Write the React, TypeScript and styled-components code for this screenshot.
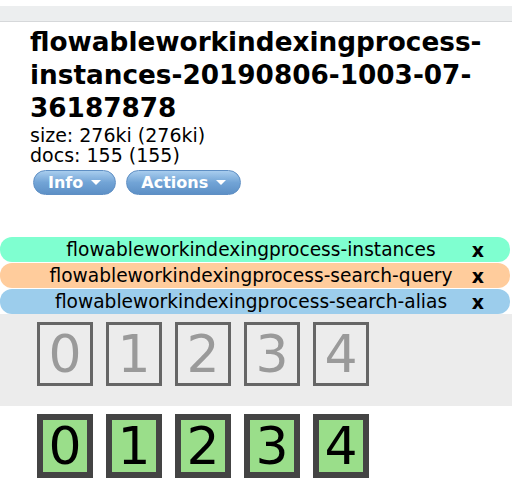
import React from "react";
import styled, { createGlobalStyle } from "styled-components";

const Global = createGlobalStyle`
  html, body { margin: 0; padding: 0; background: #fff; }
  body { font-family: "DejaVu Sans", Verdana, sans-serif; color: #000; }
`;

const Page = styled.div`
  width: 512px;
  overflow: hidden;
`;

const TopBar = styled.div`
  margin-top: 6px;
  height: 15px;
  background: #eceeef;
  border-bottom: 1px solid #d6d8da;
`;

const Header = styled.div`
  padding: 4px 0 0 30px;
`;

const Title = styled.h2`
  margin: 0;
  font-size: 26.3px;
  font-weight: bold;
  line-height: 33px;
  word-break: break-word;
`;

const Stat = styled.div`
  font-size: 19px;
  line-height: 20px;
`;

const Buttons = styled.div`
  display: flex;
  gap: 10px;
  margin: 5px 0 0 3px;
`;

const PillButton = styled.button`
  display: inline-flex;
  align-items: center;
  gap: 8px;
  height: 25px;
  padding: 0 14px;
  border-radius: 13px;
  border: 1px solid #5f8fc4;
  background: linear-gradient(#a8cdee, #72a4d6 50%, #5d90c6);
  color: #fff;
  font-family: "DejaVu Sans", Verdana, sans-serif;
  font-weight: bold;
  font-size: 16px;
`;

const Caret = styled.span`
  width: 0;
  height: 0;
  border-left: 5px solid transparent;
  border-right: 5px solid transparent;
  border-top: 5px solid #fff;
`;

const AliasList = styled.div`
  margin-top: 42px;
  display: flex;
  flex-direction: column;
  gap: 1px;
`;

const Alias = styled.div<{ $bg: string }>`
  display: flex;
  align-items: center;
  height: 25px;
  width: 510px;
  border-radius: 12px;
  background: ${(p) => p.$bg};
  font-size: 18.6px;
`;

const AliasName = styled.span`
  flex: 1;
  text-align: center;
  padding-left: 41px;
  white-space: nowrap;
`;

const Close = styled.span`
  font-weight: bold;
  font-size: 19px;
  width: 34px;
  margin-right: 15px;
  text-align: center;
`;

const ShardRow = styled.div<{ $bg: string }>`
  background: ${(p) => p.$bg};
  display: flex;
  gap: 13px;
  padding: 8px 0 20px 37px;
`;

const Shard = styled.div<{ $started: boolean }>`
  box-sizing: border-box;
  width: 56px;
  height: 64px;
  display: flex;
  align-items: center;
  justify-content: center;
  border: ${(p) => (p.$started ? "6px solid #444" : "3px solid #666")};
  background: ${(p) => (p.$started ? "#9ade8a" : "#ececec")};
  color: ${(p) => (p.$started ? "#000" : "#9a9a9a")};
  font-size: 52px;
  line-height: 1;
`;

const aliases = [
  { name: "flowableworkindexingprocess-instances", bg: "#7fffd0" },
  { name: "flowableworkindexingprocess-search-query", bg: "#ffcc9c" },
  { name: "flowableworkindexingprocess-search-alias", bg: "#9ccdec" },
];

export default function App() {
  const shards = [0, 1, 2, 3, 4];
  return (
    <Page>
      <Global />
      <TopBar />
      <Header>
        <Title>flowableworkindexingprocess-instances-20190806-1003-07-36187878</Title>
        <Stat>size: 276ki (276ki)</Stat>
        <Stat>docs: 155 (155)</Stat>
        <Buttons>
          <PillButton>Info <Caret /></PillButton>
          <PillButton>Actions <Caret /></PillButton>
        </Buttons>
      </Header>
      <AliasList>
        {aliases.map((a) => (
          <Alias key={a.name} $bg={a.bg}>
            <AliasName>{a.name}</AliasName>
            <Close>x</Close>
          </Alias>
        ))}
      </AliasList>
      <ShardRow $bg="#ececec">
        {shards.map((s) => (
          <Shard key={s} $started={false}>{s}</Shard>
        ))}
      </ShardRow>
      <ShardRow $bg="#fff">
        {shards.map((s) => (
          <Shard key={s} $started>{s}</Shard>
        ))}
      </ShardRow>
    </Page>
  );
}
